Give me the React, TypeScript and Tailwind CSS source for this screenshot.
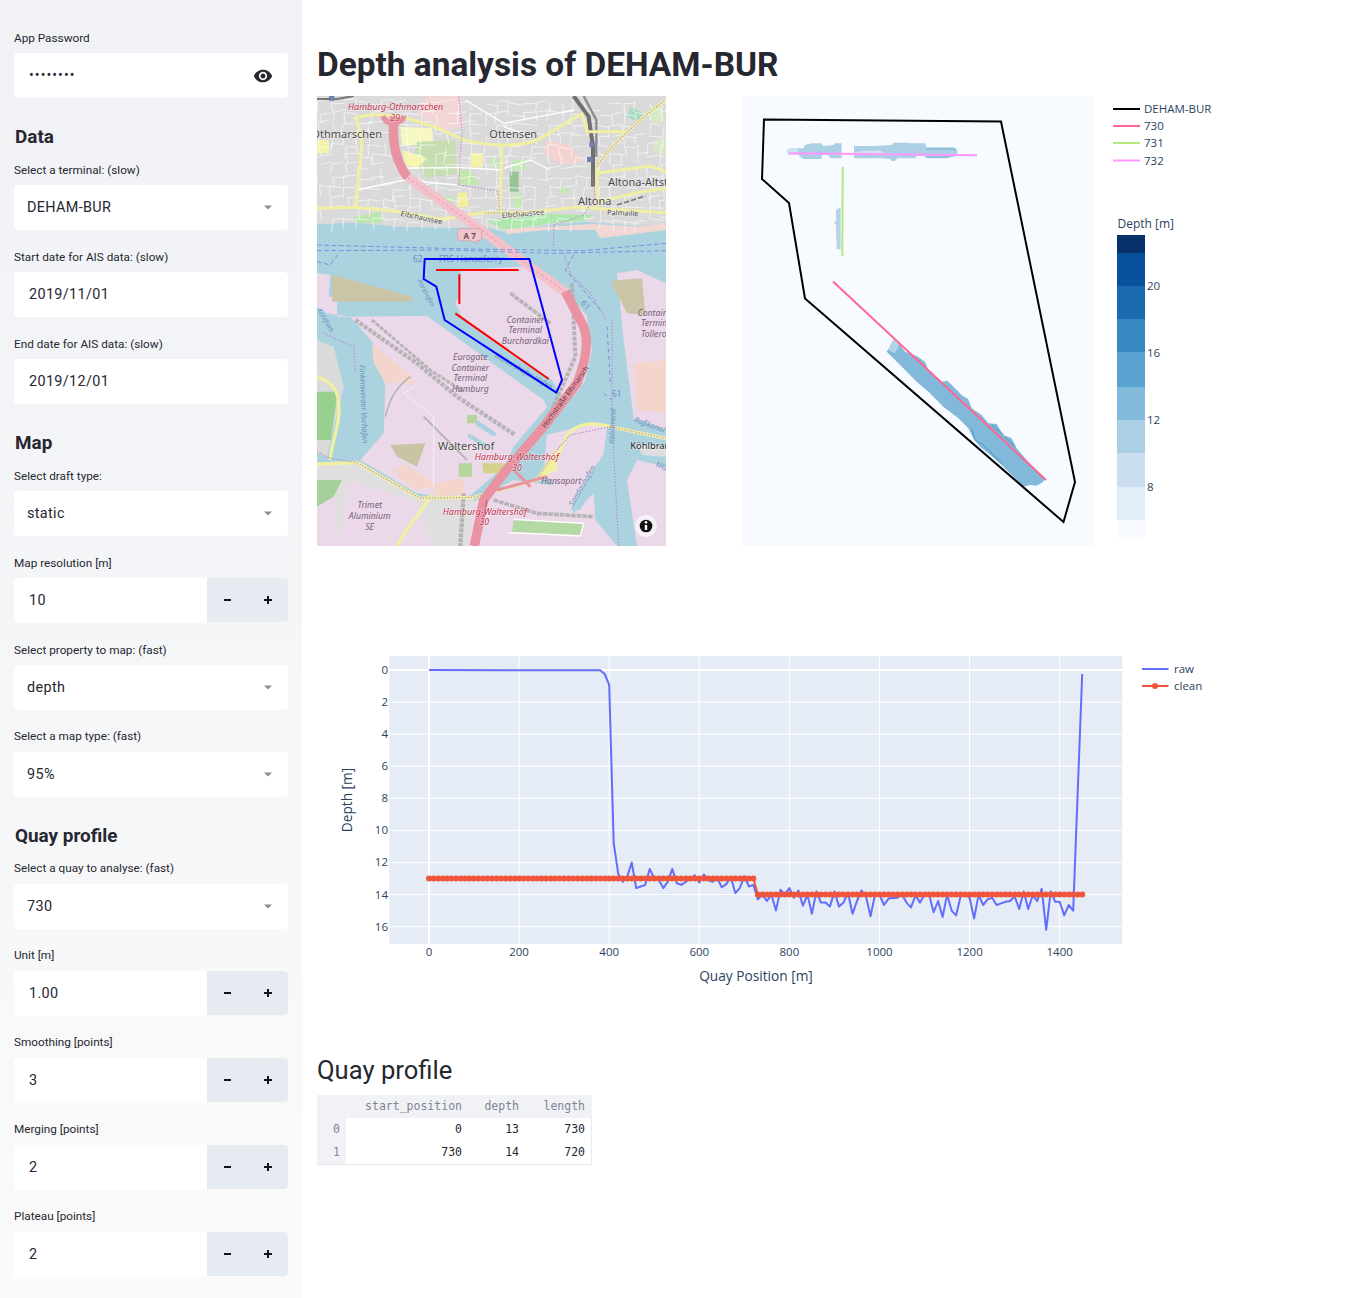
import React, { FC, ReactNode } from "react";

const uiFont = "font-['Roboto',sans-serif]";

// ---------- sidebar bits ----------

const Label: FC<{ text: string }> = ({ text }) => (
  <div className="h-[25.6px] text-[11.75px] leading-[21px] text-[#262730]">{text}</div>
);

const Field: FC<{ label: string; children: ReactNode }> = ({ label, children }) => (
  <div className="mb-[16.6px]">
    <Label text={label} />
    {children}
  </div>
);

const valueText = "text-[14.4px] tracking-[0.35px] text-[#262730]";

const Select: FC<{ label: string; value: string }> = ({ label, value }) => (
  <Field label={label}>
    <div className={`flex h-[44.8px] items-center justify-between rounded bg-white pl-[13px] pr-[16px] ${valueText}`}>
      <span>{value}</span>
      <svg width="8" height="5" viewBox="0 0 8 5">
        <path d="M0 0.5h8L4 4.5z" fill="#8a8c99" />
      </svg>
    </div>
  </Field>
);

const TextBox: FC<{ label: string; value: string }> = ({ label, value }) => (
  <Field label={label}>
    <div className={`flex h-[44.8px] items-center rounded bg-white pl-[15px] ${valueText}`}>{value}</div>
  </Field>
);

const NumberBox: FC<{ label: string; value: string }> = ({ label, value }) => (
  <Field label={label}>
    <div className="flex h-[44.8px]">
      <div className={`flex w-[193px] items-center rounded-l bg-white pl-[15px] ${valueText}`}>{value}</div>
      <div className="flex h-[44px] w-[81px] items-center rounded-r bg-[#e6eaf1] text-black">
        <div className="flex w-[40px] justify-center pl-[1px]">
          <span className="h-[2px] w-[7px] bg-[#14141c]" />
        </div>
        <div className="flex w-[40px] justify-center pl-[1px]">
          <svg width="8" height="8" viewBox="0 0 8 8">
            <path d="M3 0h2v3h3v2H5v3H3V5H0V3h3z" fill="#14141c" />
          </svg>
        </div>
      </div>
    </div>
  </Field>
);

const SideHeading: FC<{ text: string }> = ({ text }) => (
  <div className="flex h-[45px] items-center pl-[1px] text-[18.9px] font-bold text-[#262730]">{text}</div>
);

const Sidebar: FC = () => (
  <aside className="h-[1298px] w-[302px] shrink-0 bg-gradient-to-b from-[#f0f2f6] to-[#fafafa] px-[14px] pt-[27.6px]">
    <Field label="App Password">
      <div className="flex h-[44.8px] items-center justify-between rounded bg-white pl-[15px] pr-[15px] text-[#262730]">
        <span className="text-[14px] tracking-[1.1px]">••••••••</span>
        <svg width="20" height="20" viewBox="0 0 24 24" fill="#262730">
          <path d="M12 4.5C7 4.5 2.73 7.61 1 12c1.73 4.39 6 7.5 11 7.5s9.27-3.11 11-7.5c-1.73-4.39-6-7.5-11-7.5zM12 17c-2.76 0-5-2.24-5-5s2.24-5 5-5 5 2.24 5 5-2.24 5-5 5zm0-8c-1.66 0-3 1.34-3 3s1.34 3 3 3 3-1.34 3-3-1.34-3-3-3z" />
        </svg>
      </div>
    </Field>
    <SideHeading text="Data" />
    <Select label="Select a terminal: (slow)" value="DEHAM-BUR" />
    <TextBox label="Start date for AIS data: (slow)" value="2019/11/01" />
    <TextBox label="End date for AIS data: (slow)" value="2019/12/01" />
    <SideHeading text="Map" />
    <Select label="Select draft type:" value="static" />
    <NumberBox label="Map resolution [m]" value="10" />
    <Select label="Select property to map: (fast)" value="depth" />
    <Select label="Select a map type: (fast)" value="95%" />
    <SideHeading text="Quay profile" />
    <Select label="Select a quay to analyse: (fast)" value="730" />
    <NumberBox label="Unit [m]" value="1.00" />
    <NumberBox label="Smoothing [points]" value="3" />
    <NumberBox label="Merging [points]" value="2" />
    <NumberBox label="Plateau [points]" value="2" />
  </aside>
);

// ---------- map ----------

// cheap repeatable random so the street pattern stays the same on every load
const makeStreets = () => {
  let seed = 17;
  const rnd = () => {
    seed = (seed * 16807) % 2147483647;
    return seed / 2147483647;
  };
  const out: string[] = [];
  for (let x = 0; x < 1047; x += 38) {
    for (let y = 30; y < 385; y += 32) {
      const dx = rnd() * 16;
      const dy = rnd() * 14;
      if (rnd() > 0.25) out.push(`M${x + dx},${y + dy}l${30 + rnd() * 14},${-8 + rnd() * 16}`);
      if (rnd() > 0.3) out.push(`M${x + dx},${y + dy}l${-6 + rnd() * 12},${26 + rnd() * 10}`);
    }
  }
  return out.join("");
};
const streets = makeStreets();

const labelProps = { stroke: "#ffffff", strokeWidth: 3, paintOrder: "stroke" as const, strokeOpacity: 0.55 };

const MapPicture: FC = () => (
  <svg width="349" height="450" viewBox="0 0 1047 1350" className="shrink-0 font-['Noto_Sans',sans-serif]">
    <defs>
      <filter id="soft" x="0" y="0" width="100%" height="100%">
        <feGaussianBlur stdDeviation="1.4" />
      </filter>
    </defs>
    <rect width="1047" height="1350" fill="#aad3df" />
    <g filter="url(#soft)">
      {/* north bank, coordinates follow the top crop */}
      <g transform="translate(0,-18)">
        <path d="M0,18H1047V405L960,408L800,395L700,405L560,425L500,410L400,414L240,410L120,398L0,402Z" fill="#dadada" />
        <path d="M330,18H430L440,110L380,125L300,70Z" fill="#f3d6d6" />
        <path d="M690,150L760,165L800,215L735,225L680,190Z" fill="#f3d3d0" />
        <path d="M250,110L345,115L350,165L255,165Z" fill="#f7f7c4" />
        <path d="M300,155L415,150L420,250L330,265L290,220Z" fill="#c7ddb2" />
        <path d="M255,180L330,205L300,235L265,225Z" fill="#f6f5b0" />
        <path d="M578,245H605V305H578Z" fill="#98c397" />
        <path d="M425,240H460L490,285L450,285L425,280Z" fill="#c4e6ae" />
        <path d="M462,190H497V232H462Z" fill="#f4f2a8" />
        <path d="M420,310L450,305L455,350L425,352Z" fill="#f2f0a0" />
        <path d="M940,50L980,70L960,95L930,80Z" fill="#a9dbc0" />
        <path d="M0,150H35V190H0Z" fill="#f4f2a8" />
        <path d="M110,380L190,365L195,400L120,398Z" fill="#b8e6ac" />
        <path d="M510,392L700,372L830,375L800,392L690,402L560,420Z" fill="#aee8ac" />
        <path d="M565,418L830,402L960,410L1047,402V420L850,445L835,420L690,420L570,432Z" fill="#f2d8d4" />
        <path d="M585,210H625V240H585ZM520,205H545V230H520ZM730,290H755V310H730ZM380,320H410V340H380ZM590,310H615V355H590Z" fill="#c5e8b8" />
        <path d="M1000,50H1040V100H1000ZM1010,150H1047V190H1010Z" fill="#d6e8c6" />
        <path d={streets} stroke="#ffffff" strokeWidth="2" strokeOpacity="0.9" fill="none" />
        <path d="M0,355H110M120,300L260,270L420,285M240,235L420,232L555,240M560,235L640,210L700,240M560,110L620,130M445,30L560,100L770,60" stroke="#ffffff" strokeWidth="4" fill="none" />
        {/* rail */}
        <path d="M770,18L815,80L828,170L828,290" stroke="#6f6f72" strokeWidth="12" fill="none" />
        <path d="M800,18L838,90L838,200" stroke="#8b8b8e" strokeWidth="7" fill="none" />
        <path d="M0,27H60L110,18" stroke="#77777a" strokeWidth="6" fill="none" />
        <path d="M900,345L985,318" stroke="#77777a" strokeWidth="5" strokeDasharray="16 6" fill="none" />
        <path d="M36,18H52V32H36ZM817,156H833V172H817ZM810,200H826V216H810Z" fill="#6f80ad" />
        {/* yellow main roads */}
        <g stroke="#f1f0a2" strokeWidth="9" fill="none">
          <path d="M110,85C200,55 320,90 440,150C520,170 610,170 660,150C720,120 770,80 795,72L810,125L930,125" />
          <path d="M118,85L135,160L115,355" />
          <path d="M555,165L548,372" />
          <path d="M0,355L115,352L250,365L370,388L500,368L620,368L780,352L1047,368" />
          <path d="M840,230V350M840,250L1000,228L1047,245M850,335L960,308L1047,295" />
          <path d="M840,230C860,190 960,90 1047,30" />
        </g>
        {/* purple route dots */}
        <g stroke="#b78cc6" strokeWidth="3.5" strokeDasharray="4 5" fill="none">
          <path d="M425,20L435,120L425,285L545,303L548,370L500,368" />
          <path d="M840,230C860,190 960,90 1047,30M825,250L835,320L800,375L710,405V470" />
          <path d="M740,490L760,550L820,610L870,690" />
        </g>
        {/* motorway */}
        <path d="M232,80C222,160 240,220 272,262" stroke="#e892a2" strokeWidth="28" fill="none" />
        <path d="M198,78C210,110 250,105 262,78" stroke="#e892a2" strokeWidth="16" fill="none" />
      </g>

      {/* terminals and south bank, coordinates follow the lower crop */}
      <g transform="translate(0,672)">
        {/* burchardkai */}
        <path d="M432,-150L640,-162L745,-85L810,-12L825,90L805,180L772,228L735,228L705,180L440,0L415,-50L430,-75Z" fill="#ebd9e9" />
        {/* west of parkhafen */}
        <path d="M0,-140L40,-136L35,-70L300,-50V-30L60,-30L60,-10L330,-12L680,240L690,262L640,320L590,380L560,440L480,510L440,540L300,520L130,420L200,340L205,200L170,70L100,-10L30,-20L0,-40Z" fill="#ebd9e9" />
        <path d="M45,-136L285,-70L285,-50L45,-55Z" fill="#c9c5a6" />
        <path d="M60,-55H300V-25H60Z" fill="#aad3df" />
        <path d="M165,70L285,170L290,200L260,185L205,190L170,130Z" fill="#f3d5cb" />
        <path d="M220,375L325,370L300,440L240,410Z" fill="#c8c4a4" />
        <path d="M230,455L260,430L350,490L350,500L290,510Z" fill="#f3d5cb" />
        <path d="M350,490L440,475L440,525L350,530Z" fill="#f3d5cb" />
        <path d="M450,285H480V310H450ZM425,430H465V470H425Z" fill="#b5d69a" />
        <path d="M480,300L540,340L530,350L475,315ZM455,340L515,375L505,385L450,350Z" fill="#aad3df" />
        {/* south-west land */}
        <path d="M0,60L50,80L80,200L30,410L0,400Z" fill="#dadada" />
        <path d="M0,215H62L42,360L0,360Z" fill="#97d08f" />
        <path d="M0,430L130,425L300,530L470,535L480,678H0Z" fill="#e0dfdf" />
        <path d="M100,480L300,550L345,678H60Z" fill="#ebd9e9" />
        <path d="M0,480L75,480L50,530L0,560Z" fill="#a6cf9c" />
        <path d="M0,560L50,530L60,678H0Z" fill="#ebd9e9" />
        <path d="M470,545L590,480L740,500L770,580L830,520L835,600L900,678H450Z" fill="#ebd9e9" />
        <path d="M590,600L800,612L790,645L585,635Z" fill="#b5d9a3" />
        <path d="M690,345L825,310L870,320L860,400L760,570L700,480L680,460Z" fill="#ebd9e9" />
        <path d="M760,570L840,430L865,440L790,570Z" fill="#aad3df" />
        <path d="M660,470L720,380L720,450L640,490Z" fill="#f4eea0" />
        <path d="M495,430H590L560,460L500,460Z" fill="#d2d28c" />
        {/* east of koehlbrand */}
        <path d="M900,-140L960,-150L1047,-110V330L950,295L920,60Z" fill="#ebd9e9" />
        <path d="M880,-118L975,-125L985,-15L930,-20Z" fill="#c9c5a6" />
        <path d="M950,130L1047,120V280L960,270Z" fill="#f3d5cb" />
        <path d="M930,480L960,420L1047,440V678H960Z" fill="#ebd9e9" />
        <path d="M960,370L1047,385V410L975,405Z" fill="#e0dfdf" />
        {/* yard tracks */}
        <g stroke="#aeabae" fill="none" strokeOpacity="0.85">
          <path d="M115,0L300,130L420,230L595,345" strokeWidth="13" strokeDasharray="12 4" />
          <path d="M165,0L340,150L440,215" strokeWidth="9" strokeDasharray="12 4" />
          <path d="M580,-80L700,10" strokeWidth="11" strokeDasharray="14 3" />
          <path d="M765,-110L775,110L700,280" strokeWidth="12" strokeDasharray="12 4" />
          <path d="M530,540L660,580L830,590" strokeWidth="11" strokeDasharray="14 3" />
          <path d="M440,520L430,678" strokeWidth="13" strokeDasharray="12 3" />
          <path d="M205,290C220,230 240,200 280,170" strokeWidth="5" />
          <path d="M320,290L450,420" strokeWidth="6" />
        </g>
        <path d="M260,220L350,290L350,500M260,220L290,200" stroke="#f6f2f6" strokeWidth="2.5" fill="none" />
        <path d="M590,598L800,610L790,648L575,638" stroke="#ffffff" strokeWidth="4" fill="none" />
        {/* roads */}
        <g stroke="#f1f0a2" strokeWidth="10" fill="none">
          <path d="M0,170C60,190 70,230 65,290C60,340 40,380 40,420" />
          <path d="M0,432L120,428L310,535L470,532L660,480C700,470 720,420 750,345C780,310 820,305 880,320L1047,355" />
          <path d="M340,525C320,570 270,620 240,678" />
        </g>
        <g stroke="#b78cc6" strokeWidth="3.5" strokeDasharray="4 5" fill="none">
          <path d="M0,395L40,415L120,428L310,535L470,532L660,480L710,400L760,345L880,320L1047,355" />
          <path d="M20,40L110,80L115,160M885,0L885,240L890,400L905,678" />
        </g>
        {/* motorway, light where it runs through the tunnel */}
        <path d="M272,-428L520,-250L640,-160L748,-82" stroke="#f3c2cb" strokeWidth="28" fill="none" />
        <path d="M272,-428L520,-250L640,-160L748,-82" stroke="#d88896" strokeWidth="2" strokeDasharray="8 8" fill="none" />
        <path d="M745,-85L800,20C815,60 812,110 780,190L680,320L560,460L500,540L472,678" stroke="#e892a2" strokeWidth="28" fill="none" />
        <path d="M540,510L690,470M590,450L640,500" stroke="#e892a2" strokeWidth="9" fill="none" />
        <path d="M510,540L500,590" stroke="#c8507a" strokeWidth="3" fill="none" />
      </g>

      {/* ferry routes */}
      <g transform="translate(0,-18)" stroke="#7d8fdf" strokeWidth="3" strokeDasharray="14 8" fill="none">
        <path d="M0,465L260,472L500,478L800,482L1047,460" />
        <path d="M0,482L400,480L700,490L1047,482" />
        <path d="M0,515L40,525L65,490" />
        <path d="M770,495L745,540L790,590L850,660" />
      </g>
      <g transform="translate(0,672)" stroke="#7d8fdf" strokeWidth="3" strokeDasharray="12 10" fill="none">
        <path d="M870,20L880,190M860,220L885,240" />
      </g>
    </g>

    {/* place names */}
    <g transform="translate(0,-18)">
      <path d="M480,460l-20,-8l-30,0a8,8 0 0 1 -8,-8v-20a8,8 0 0 1 8,-8h56a8,8 0 0 1 8,8v20a8,8 0 0 1 -8,8h-6z" fill="#f0c6cd" stroke="#d39aa6" strokeWidth="2" />
      <text x="458" y="446" textAnchor="middle" fontSize="24" fontWeight="700" fill="#6e4a55">A 7</text>
      <text x="93" y="60" fontSize="27" fontStyle="italic" fill="#c22d4b" {...labelProps}>Hamburg-Othmarschen</text>
      <text x="235" y="92" textAnchor="middle" fontSize="26" fontStyle="italic" fill="#c22d4b" {...labelProps}>29</text>
      <text x="-17" y="143" fontSize="33" fill="#484848" {...labelProps}>Othmarschen</text>
      <text x="517" y="143" fontSize="33" fill="#484848" {...labelProps}>Ottensen</text>
      <text x="873" y="287" fontSize="33" fill="#484848" {...labelProps}>Altona-Altstadt</text>
      <text x="783" y="345" fontSize="33" fill="#484848" {...labelProps}>Altona</text>
      <text x="870" y="375" fontSize="22" fill="#484848" transform="rotate(2 870 375)" {...labelProps}>Palmaille</text>
      <text x="250" y="377" fontSize="22" fill="#484848" transform="rotate(12 250 377)" {...labelProps}>Elbchaussee</text>
      <text x="555" y="384" fontSize="22" fill="#484848" transform="rotate(-5 555 384)" {...labelProps}>Elbchaussee</text>
      <text x="288" y="517" fontSize="25" fill="#7089c9">62</text>
      <text x="365" y="517" fontSize="27" fill="#7089c9">FRS Hanseferry</text>
      <text x="790" y="640" fontSize="25" fill="#7089c9" transform="rotate(50 790 640)">61</text>
      <text x="300" y="572" fontSize="20" fontStyle="italic" fill="#6a93bf" transform="rotate(62 300 572)">Parkhafen</text>
      <text x="0" y="660" fontSize="20" fontStyle="italic" fill="#6a93bf" transform="rotate(60 0 660)">Köhlfleth</text>
      <text x="962" y="678" fontSize="26" fontStyle="italic" fill="#77607c">Container</text>
    </g>
    <g transform="translate(0,672)">
      <g fontSize="26" fontStyle="italic" fill="#77607c" textAnchor="middle">
        <text x="625" y="9">Container</text>
        <text x="625" y="40">Terminal</text>
        <text x="625" y="72">Burchardkai</text>
        <text x="460" y="120">Eurogate</text>
        <text x="460" y="152">Container</text>
        <text x="460" y="184">Terminal</text>
        <text x="460" y="216">Hamburg</text>
        <text x="158" y="564">Trimet</text>
        <text x="158" y="597">Aluminium</text>
        <text x="158" y="630">SE</text>
      </g>
      <text x="972" y="18" fontSize="26" fontStyle="italic" fill="#77607c">Terminal</text>
      <text x="972" y="50" fontSize="26" fontStyle="italic" fill="#77607c">Tollerort</text>
      <text x="673" y="492" fontSize="25.5" fontStyle="italic" fill="#77607c">Hansaport</text>
      <text x="363" y="390" fontSize="33" fill="#484848" {...labelProps}>Waltershof</text>
      <text x="940" y="386" fontSize="28" fill="#222222" {...labelProps}>Köhlbrand</text>
      <text x="473" y="421" fontSize="27" fontStyle="italic" fill="#c22d4b" {...labelProps}>Hamburg-Waltershof</text>
      <text x="600" y="453" textAnchor="middle" fontSize="26" fontStyle="italic" fill="#c22d4b" {...labelProps}>30</text>
      <text x="377" y="584" fontSize="27" fontStyle="italic" fill="#c22d4b" {...labelProps}>Hamburg-Waltershof</text>
      <text x="502" y="615" textAnchor="middle" fontSize="26" fontStyle="italic" fill="#c22d4b" {...labelProps}>30</text>
      <g fontSize="23" fontStyle="italic" fill="#6a93bf">
        <text x="128" y="135" transform="rotate(88 128 135)">Finkenwerder Vorhafen</text>
        <text x="530" y="110" transform="rotate(30 530 110)">Waltershofer Hafen</text>
        <text x="768" y="560" transform="rotate(-60 768 560)">Sandauhafen</text>
        <text x="892" y="372" transform="rotate(-88 892 372)">Köhlbrand</text>
        <text x="950" y="305" transform="rotate(20 950 305)">Roßkanal</text>
        <text x="1015" y="440" transform="rotate(15 1015 440)">Neß</text>
      </g>
      <text x="685" y="325" fontSize="21" fill="#5d3a44" transform="rotate(-54 685 325)">Hochstraße Elbmarsch</text>
      <text x="885" y="232" fontSize="25" fill="#7089c9">61</text>
    </g>

    {/* quay overlay */}
    <g transform="translate(0,-18)">
      <path d="M323,507H637L735,870L718,908L383,690L358,590L320,567Z" fill="none" stroke="#0000ff" strokeWidth="6" strokeLinejoin="round" />
      <path d="M357,540H605M427,553V642M415,670L695,867" fill="none" stroke="#ff0000" strokeWidth="6" />
    </g>

    {/* attribution button */}
    <circle cx="987" cy="1290" r="33" fill="#ffffff" fillOpacity="0.6" />
    <circle cx="987" cy="1290" r="19" fill="#111111" />
    <rect x="983.5" y="1287" width="7" height="15" fill="#ffffff" />
    <circle cx="987" cy="1279" r="4" fill="#ffffff" />
  </svg>
);

// ---------- heatmap of the terminal ----------

const bins: [number, number, string][] = [
  [235, 253, "#08306b"],
  [253, 286, "#08519c"],
  [286, 319, "#1b69af"],
  [319, 352, "#3787c0"],
  [352, 387, "#5aa2cf"],
  [387, 420, "#82bbdb"],
  [420, 453, "#abd0e6"],
  [453, 487, "#cbdef0"],
  [487, 520, "#e1edf8"],
  [520, 537, "#f7fbff"],
];

const depthLegend: [string, string, number][] = [
  ["DEHAM-BUR", "#000000", 109],
  ["730", "#ff6692", 126],
  ["731", "#b6e880", 143],
  ["732", "#ff97ff", 160.5],
];

const TerminalPlot: FC = () => (
  <svg width="500" height="450" viewBox="743 96 500 450" className="ml-[77px] shrink-0 font-['Open_Sans',sans-serif]">
    <rect x="743" y="96" width="350" height="450" fill="#f7fbff" />
    {/* depth cells along the two northern quays */}
    <g transform="translate(740,90) scale(0.3333)">
      <path d="M140,182L150,175H190L195,165L215,160H245L250,168L280,165L285,160H305V205H270L265,195H245V207H190L175,195H145Z" fill="#abcfe5" />
      <path d="M140,182L150,175H172L178,195H145Z" fill="#cfe3f1" />
      <path d="M342,168H400L455,165L460,158H505L512,160H555L560,172H640L652,180V195L620,205H560L550,198H530L525,205H472L465,213H455L450,207L420,205H400L342,205Z" fill="#abcfe5" />
      <path d="M345,186L375,182H425L432,192H345Z" fill="#cfe3f1" />
      <path d="M560,175H648V181H560ZM555,197H650L620,204H565Z" fill="#8fbfdd" />
      <path d="M288,360L295,355H302V478H290L288,405L283,398L288,392Z" fill="#b6d3e8" />
    </g>
    {/* depth cells along quay 730 */}
    <g transform="translate(860,320) scale(0.3333)">
      <path d="M100,60L118,72L135,95L170,108L195,125L205,150L245,185L262,182L285,205L305,225L325,238L335,265L365,285L385,310L410,312L430,345L455,355L470,385L500,420L555,478L548,487L530,497L510,495L490,500L440,450L420,430L385,400L360,380L340,355L325,325L295,295L250,260L210,220L170,185L130,145L100,115L80,95L85,88Z" fill="#82b8da" />
      <path d="M100,58L118,72L105,100L85,90Z" fill="#b4d4e8" />
      <path d="M335,325L345,360L370,375L400,405L425,430M395,315L430,345M435,350L465,380" fill="none" stroke="#5ba3d0" strokeWidth="4" />
    </g>
    {/* outline and quays */}
    <path d="M764,119.5L1001,121.5L1075,482L1063.5,522L805,298.5L789,203L762,179Z" fill="none" stroke="#000000" strokeWidth="2" />
    <path d="M833,281.5L1046,480" fill="none" stroke="#ff6692" strokeWidth="2" />
    <path d="M842.7,167L842.3,256" fill="none" stroke="#b6e880" strokeWidth="2" />
    <path d="M789,153.3L977,155.3" fill="none" stroke="#ff97ff" strokeWidth="2" />
    {/* legend */}
    {depthLegend.map(([name, color, y]) => (
      <g key={name}>
        <line x1="1113" x2="1140" y1={y} y2={y} stroke={color} strokeWidth="2" />
        <text x="1144" y={y + 4} fontSize="11.5" fill="#2a3f5f">
          {name}
        </text>
      </g>
    ))}
    {/* colour bar */}
    <text x="1117.5" y="228" fontSize="12" fill="#2a3f5f">
      Depth [m]
    </text>
    {bins.map(([y0, y1, color]) => (
      <rect key={y0} x="1117" y={y0} width="28" height={y1 - y0} fill={color} />
    ))}
    {[
      ["20", 286],
      ["16", 353],
      ["12", 420],
      ["8", 487],
    ].map(([t, y]) => (
      <text key={t} x="1147" y={Number(y) + 4} fontSize="11.5" fill="#2a3f5f">
        {t}
      </text>
    ))}
  </svg>
);

// ---------- depth profile ----------

const sx = (v: number) => 429 + 0.4505 * v;
const sy = (d: number) => 670 + 16.04 * d;

const rawTail = [
  13.2, 12.9, 12, 13.6, 13.5, 13.4, 12.4, 13, 13.1, 13.6, 13.2, 12.4, 13.3, 13.4, 13.2, 13, 12.8, 13.25, 12.75, 13.1,
  13.2, 13, 13.55, 13.35, 12.9, 13.9, 13.6, 12.85, 13.5, 13.4, 14.3, 14, 14.4, 14, 15, 13.7, 14, 13.6, 14.2, 13.75,
  14.7, 14, 15.2, 13.8, 14.5, 14.5, 14.75, 13.8, 14.75, 14.5, 13.9, 15.2, 14.4, 13.75, 14.1, 15.35, 14, 14, 14.65,
  14.25, 14.22, 14.2, 14, 14.5, 14.8, 14.05, 14.5, 14, 14, 15.1, 14.4, 15.4, 14, 15, 15.3, 14.1, 14, 14.2, 15.5, 14,
  14.65, 14.3, 14.2, 14.65, 14.55, 14.45, 14.4, 14.1, 14.9, 13.8, 14.9, 14.05, 14.4, 13.65, 16.2, 13.8, 14.45, 14.45,
  15.3, 14.65, 15,
];

const rawPoints: [number, number][] = [
  [0, 0],
  [380, 0.02],
  [390, 0.25],
  [400, 0.93],
  [410, 10.8],
  [420, 12.7],
  ...rawTail.map((d, i): [number, number] => [430 + i * 10, d]),
  [1450, 0.25],
];

const cleanX = Array.from({ length: 146 }, (_, i) => i * 10);
const cleanDepth = (v: number) => (v <= 720 ? 13 : 14);
const toPath = (pts: [number, number][]) => pts.map(([x, d], i) => `${i ? "L" : "M"}${sx(x).toFixed(1)},${sy(d).toFixed(1)}`).join("");

const ProfileChart: FC = () => (
  <svg width="900" height="350" viewBox="317 646 900 350" className="mt-[100px] block font-['Open_Sans',sans-serif]">
    <rect x="389.3" y="656" width="733" height="288" fill="#e5ecf6" />
    {[200, 400, 600, 800, 1000, 1200, 1400].map((v) => (
      <line key={v} x1={sx(v)} x2={sx(v)} y1="656" y2="944" stroke="#ffffff" />
    ))}
    {[2, 4, 6, 8, 10, 12, 14, 16].map((d) => (
      <line key={d} x1="389.3" x2="1122.3" y1={sy(d)} y2={sy(d)} stroke="#ffffff" />
    ))}
    <line x1={sx(0)} x2={sx(0)} y1="656" y2="944" stroke="#ffffff" strokeWidth="2" />
    <line x1="389.3" x2="1122.3" y1={sy(0)} y2={sy(0)} stroke="#ffffff" strokeWidth="2" />
    <path d={toPath(rawPoints)} fill="none" stroke="#636efa" strokeWidth="2" strokeLinejoin="round" />
    <path d={toPath(cleanX.map((v): [number, number] => [v, cleanDepth(v)]))} fill="none" stroke="#ef553b" strokeWidth="2" />
    {cleanX.map((v) => (
      <circle key={v} cx={sx(v)} cy={sy(cleanDepth(v))} r="3" fill="#ef553b" />
    ))}
    {[0, 200, 400, 600, 800, 1000, 1200, 1400].map((v) => (
      <text key={v} x={sx(v)} y="956" textAnchor="middle" fontSize="11.5" fill="#2a3f5f">
        {v}
      </text>
    ))}
    {[0, 2, 4, 6, 8, 10, 12, 14, 16].map((d) => (
      <text key={d} x="388" y={sy(d) + 4} textAnchor="end" fontSize="11.5" fill="#2a3f5f">
        {d}
      </text>
    ))}
    <text x="756" y="981" textAnchor="middle" fontSize="13.7" fill="#2a3f5f">
      Quay Position [m]
    </text>
    <text x="352" y="800" textAnchor="middle" fontSize="13.7" fill="#2a3f5f" transform="rotate(-90 352 800)">
      Depth [m]
    </text>
    <line x1="1142" x2="1168.5" y1="669" y2="669" stroke="#636efa" strokeWidth="2" />
    <text x="1174" y="673" fontSize="11.5" fill="#2a3f5f">
      raw
    </text>
    <line x1="1142" x2="1168.5" y1="686" y2="686" stroke="#ef553b" strokeWidth="2" />
    <circle cx="1155" cy="686" r="3" fill="#ef553b" />
    <text x="1174" y="690" fontSize="11.5" fill="#2a3f5f">
      clean
    </text>
  </svg>
);

// ---------- table ----------

const tableRows = [
  ["0", "0", "13", "730"],
  ["1", "730", "14", "720"],
];

const ProfileTable: FC = () => (
  <div className="grid w-[275px] grid-cols-[29px_123px_57px_66px] border-b border-r border-[#e6eaf1] font-['DejaVu_Sans_Mono',monospace] text-[11.5px] leading-[23px]">
    <div className="bg-[#f0f2f6]" />
    {["start_position", "depth", "length"].map((h) => (
      <div key={h} className="bg-[#f0f2f6] pr-[7px] text-right text-[#808495]">
        {h}
      </div>
    ))}
    {tableRows.map((row) =>
      row.map((cell, i) => (
        <div
          key={`${row[0]}-${i}`}
          className={i === 0 ? "bg-[#f0f2f6] pr-[6px] text-right text-[#808495]" : "pr-[7px] text-right text-[#262730]"}
        >
          {cell}
        </div>
      ))
    )}
  </div>
);

const App: FC = () => (
  <div className={`flex h-[1298px] w-[1348px] overflow-hidden bg-white ${uiFont}`}>
    <Sidebar />
    <main className="flex-1 pl-[15px]">
      <h1 className="h-[96px] pt-[44px] text-[33.4px] font-bold leading-[42px] text-[#262730]">Depth analysis of DEHAM-BUR</h1>
      <div className="flex">
        <MapPicture />
        <TerminalPlot />
      </div>
      <ProfileChart />
      <h2 className="mt-[57px] text-[25.6px] font-normal leading-[34px] text-[#262730]">Quay profile</h2>
      <div className="mt-[8px]">
        <ProfileTable />
      </div>
    </main>
  </div>
);

export default App;
